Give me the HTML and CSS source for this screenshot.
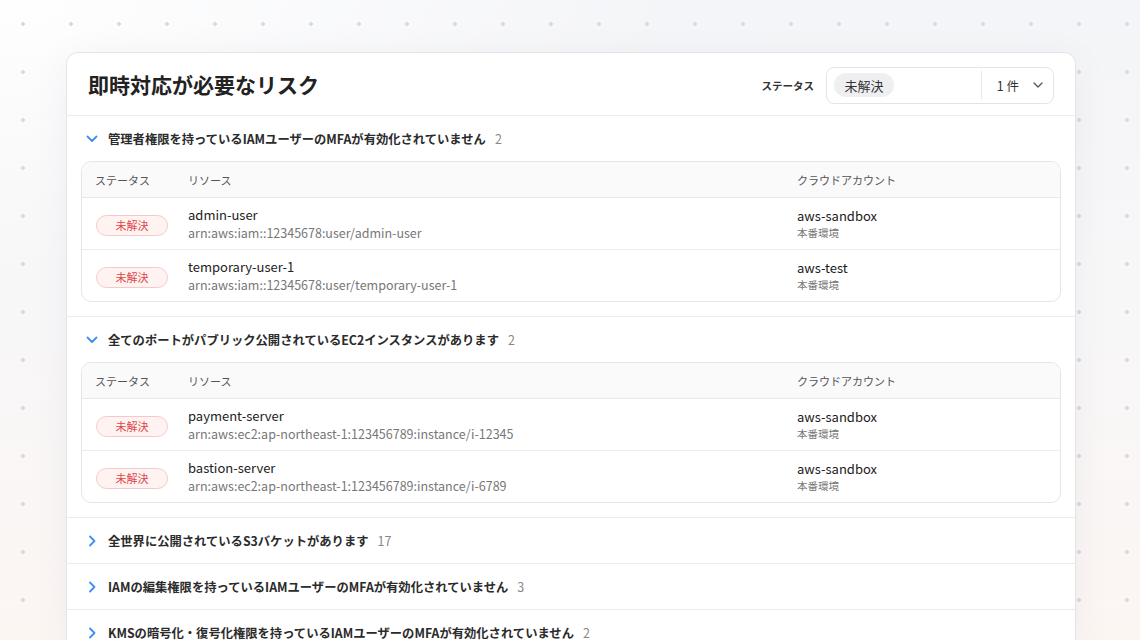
FILE: index.html
```html
<!DOCTYPE html>
<html lang="ja">
<head>
<meta charset="utf-8">
<title>即時対応が必要なリスク</title>
<link rel="stylesheet" href="styles.css">
</head>
<body>
<div class="page">
  <section class="card">
    <header class="card-head">
      <h1 class="title">即時対応が必要なリスク</h1>
      <div class="filter">
        <span class="filter-label">ステータス</span>
        <div class="select">
          <span class="chip">未解決</span>
          <span class="select-sep"></span>
          <span class="select-count">1 件</span>
          <svg class="select-caret" width="10" height="6" viewBox="0 0 10 6"><path d="M1 1l4 4 4-4" fill="none" stroke="#555" stroke-width="1.3" stroke-linecap="round" stroke-linejoin="round"/></svg>
        </div>
      </div>
    </header>

    <div class="group open">
      <div class="group-head">
        <svg class="chev" width="12" height="8" viewBox="0 0 12 8"><path d="M1.5 1.5l4.5 4.5 4.5-4.5" fill="none" stroke="#3b8ff0" stroke-width="1.8" stroke-linecap="round" stroke-linejoin="round"/></svg>
        <span class="group-title">管理者権限を持っているIAMユーザーのMFAが有効化されていません</span>
        <span class="group-count">2</span>
      </div>
      <div class="table">
        <div class="row thead">
          <span>ステータス</span><span>リソース</span><span>クラウドアカウント</span>
        </div>
        <div class="row">
          <span><span class="badge">未解決</span></span>
          <span class="res"><span class="res-name">admin-user</span><span class="res-arn">arn:aws:iam::12345678:user/admin-user</span></span>
          <span class="acc"><span class="acc-name">aws-sandbox</span><span class="acc-env">本番環境</span></span>
        </div>
        <div class="row">
          <span><span class="badge">未解決</span></span>
          <span class="res"><span class="res-name">temporary-user-1</span><span class="res-arn">arn:aws:iam::12345678:user/temporary-user-1</span></span>
          <span class="acc"><span class="acc-name">aws-test</span><span class="acc-env">本番環境</span></span>
        </div>
      </div>
    </div>

    <div class="group open">
      <div class="group-head">
        <svg class="chev" width="12" height="8" viewBox="0 0 12 8"><path d="M1.5 1.5l4.5 4.5 4.5-4.5" fill="none" stroke="#3b8ff0" stroke-width="1.8" stroke-linecap="round" stroke-linejoin="round"/></svg>
        <span class="group-title">全てのポートがパブリック公開されているEC2インスタンスがあります</span>
        <span class="group-count">2</span>
      </div>
      <div class="table">
        <div class="row thead">
          <span>ステータス</span><span>リソース</span><span>クラウドアカウント</span>
        </div>
        <div class="row">
          <span><span class="badge">未解決</span></span>
          <span class="res"><span class="res-name">payment-server</span><span class="res-arn">arn:aws:ec2:ap-northeast-1:123456789:instance/i-12345</span></span>
          <span class="acc"><span class="acc-name">aws-sandbox</span><span class="acc-env">本番環境</span></span>
        </div>
        <div class="row">
          <span><span class="badge">未解決</span></span>
          <span class="res"><span class="res-name">bastion-server</span><span class="res-arn">arn:aws:ec2:ap-northeast-1:123456789:instance/i-6789</span></span>
          <span class="acc"><span class="acc-name">aws-sandbox</span><span class="acc-env">本番環境</span></span>
        </div>
      </div>
    </div>

    <div class="group">
      <div class="group-head">
        <svg class="chev" width="12" height="12" viewBox="0 0 12 12"><path d="M4 1.5l4.5 4.5-4.5 4.5" fill="none" stroke="#3b8ff0" stroke-width="1.8" stroke-linecap="round" stroke-linejoin="round"/></svg>
        <span class="group-title">全世界に公開されているS3バケットがあります</span>
        <span class="group-count">17</span>
      </div>
    </div>
    <div class="group">
      <div class="group-head">
        <svg class="chev" width="12" height="12" viewBox="0 0 12 12"><path d="M4 1.5l4.5 4.5-4.5 4.5" fill="none" stroke="#3b8ff0" stroke-width="1.8" stroke-linecap="round" stroke-linejoin="round"/></svg>
        <span class="group-title">IAMの編集権限を持っているIAMユーザーのMFAが有効化されていません</span>
        <span class="group-count">3</span>
      </div>
    </div>
    <div class="group">
      <div class="group-head">
        <svg class="chev" width="12" height="12" viewBox="0 0 12 12"><path d="M4 1.5l4.5 4.5-4.5 4.5" fill="none" stroke="#3b8ff0" stroke-width="1.8" stroke-linecap="round" stroke-linejoin="round"/></svg>
        <span class="group-title">KMSの暗号化・復号化権限を持っているIAMユーザーのMFAが有効化されていません</span>
        <span class="group-count">2</span>
      </div>
    </div>
  </section>
</div>
</body>
</html>
```

FILE: styles.css
```css
* { box-sizing: border-box; }
html, body { margin: 0; padding: 0; }
body {
  width: 1140px;
  height: 640px;
  overflow: hidden;
  font-family: "Noto Sans CJK JP", "Noto Sans", sans-serif;
  color: #222;
  background-color: #f7f7f9;
  background-image:
    radial-gradient(circle, #d9dadf 0 1.6px, transparent 2.1px),
    radial-gradient(ellipse 60% 45% at 0% 0%, rgba(255,255,255,0.95), rgba(255,255,255,0) 100%),
    linear-gradient(180deg, #f4f5f8 0%, #f8f7f8 50%, #fcf6f3 100%);
  background-size: 48px 48px, 100% 100%, 100% 100%;
  background-position: -1px 0, 0 0, 0 0;
}
.page {
  padding: 52px 64px 0 66px;
}
.card {
  width: 1010px;
  background: #fff;
  border: 1px solid #e4e5e9;
  border-radius: 12px;
  box-shadow: 0 6px 40px rgba(40, 40, 70, 0.05);
  overflow: hidden;
  height: 600px;
}
.card-head {
  height: 62px;
  display: flex;
  align-items: center;
  justify-content: space-between;
  padding: 0 21px 0 21px;
}
.title {
  margin: 0;
  font-size: 21px;
  font-weight: 700;
  color: #222;
}
.filter {
  display: flex;
  align-items: center;
  gap: 12px;
  position: relative;
  top: 1px;
}
.filter-label {
  font-size: 10.5px;
  font-weight: 700;
  color: #333;
}
.select {
  width: 228px;
  height: 37px;
  border: 1px solid #e3e4e8;
  border-radius: 8px;
  display: flex;
  align-items: center;
  padding: 0 10px 0 7px;
}
.chip {
  width: 60px;
  height: 24px;
  border-radius: 12px;
  background: #efeff1;
  font-size: 13px;
  color: #333;
  display: flex;
  align-items: center;
  justify-content: center;
}
.select-sep {
  width: 1px;
  height: 28px;
  background: #e6e6ea;
  margin-left: auto;
}
.select-count {
  font-size: 12.5px;
  color: #333;
  margin-left: 15px;
  margin-right: 14px;
}
.select-caret { display: block; }

.group {
  border-top: 1px solid #ebebee;
}
.group-head {
  height: 45px;
  display: flex;
  align-items: center;
  padding-left: 19px;
}
.chev { display: block; flex: none; margin-right: 10px; }
.group-title {
  font-size: 12.3px;
  font-weight: 700;
  color: #2b2b2b;
}
.group-count {
  font-size: 12.5px;
  color: #888;
  margin-left: 9px;
}
.table {
  margin: 0 14px 14px 14px;
  border: 1px solid #e6e6ea;
  border-radius: 10px;
  overflow: hidden;
}
.row {
  display: grid;
  grid-template-columns: 93px 609px 1fr;
  align-items: center;
  padding-left: 13px;
  height: 52px;
  border-top: 1px solid #ececef;
}
.row.thead {
  height: 35px;
  border-top: none;
  background: #fafafa;
  font-size: 11px;
  color: #555;
}
.row.thead + .row { border-top: 1px solid #e8e8eb; }
.badge {
  display: inline-flex;
  align-items: center;
  justify-content: center;
  width: 72px;
  height: 21px;
  border: 1px solid #f6c9c9;
  background: #fff3f2;
  border-radius: 11px;
  color: #e0464a;
  font-size: 11px;
  margin-left: 1px;
}
.res, .acc { display: flex; flex-direction: column; }
.res-name {
  font-size: 13px;
  color: #222;
  line-height: 18px;
}
.res-arn {
  font-size: 12.5px;
  color: #777;
  line-height: 18px;
}
.acc-name {
  font-size: 13px;
  color: #1a1a1a;
  font-weight: 400;
  line-height: 18px;
}
.acc-env {
  font-size: 10.5px;
  color: #777;
  line-height: 16px;
}
```
